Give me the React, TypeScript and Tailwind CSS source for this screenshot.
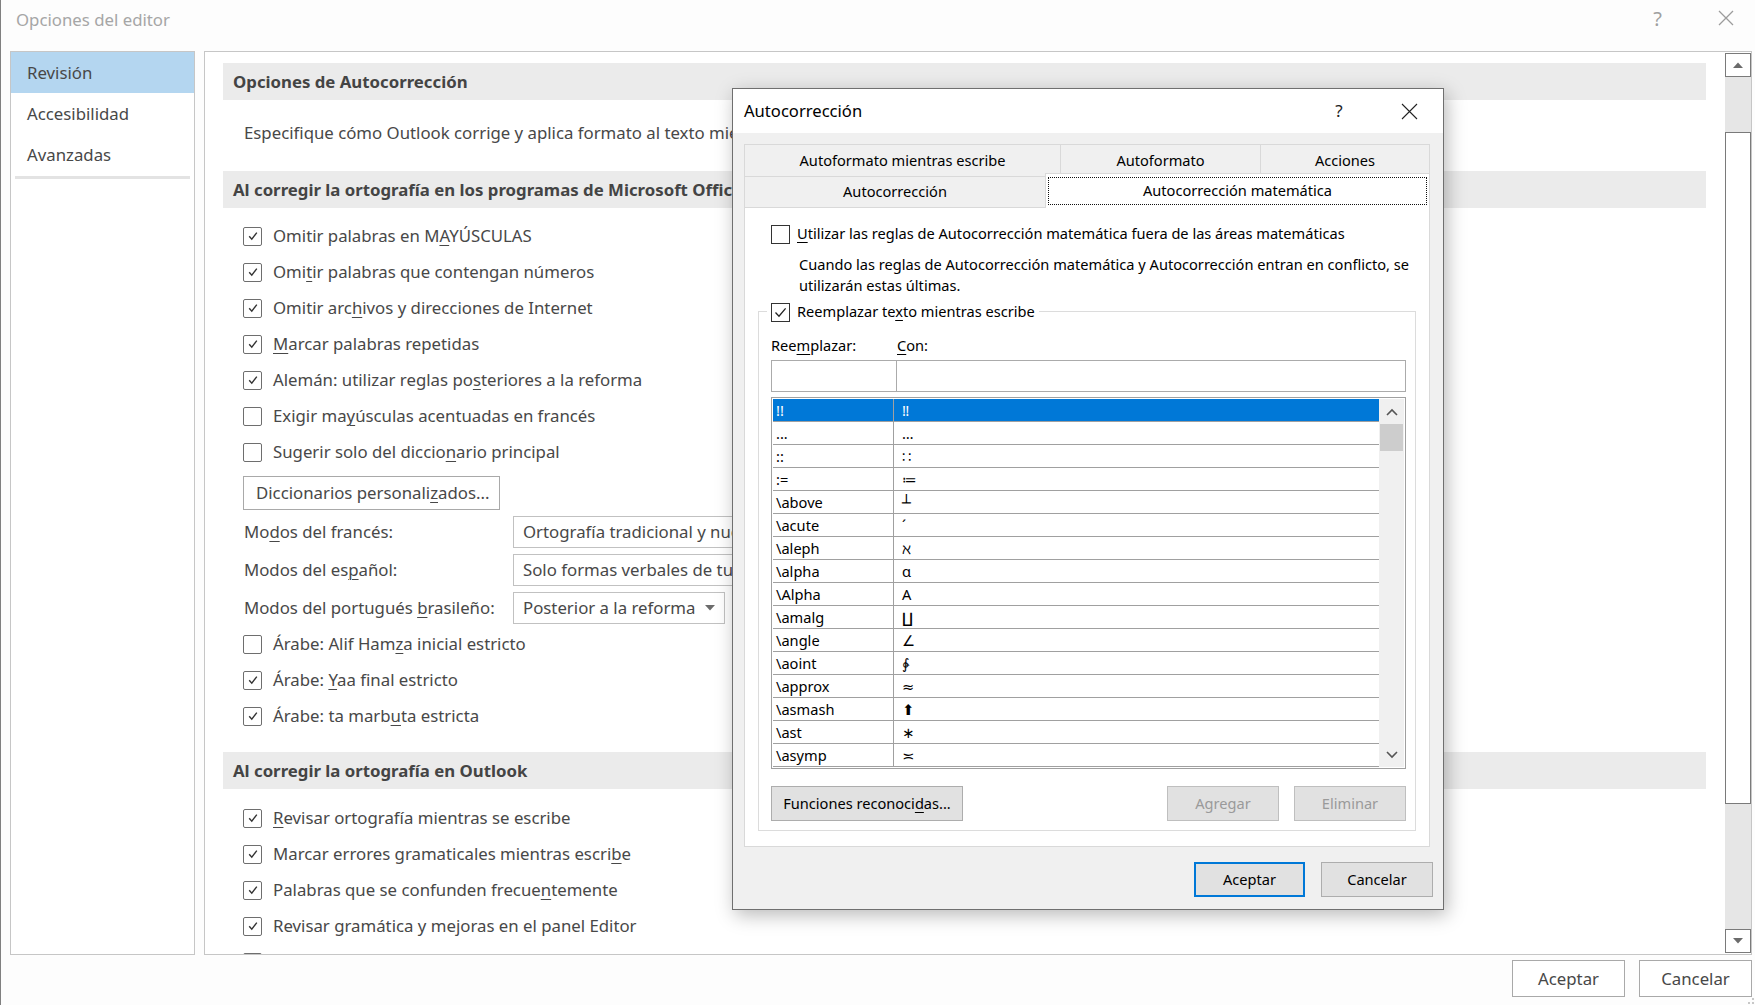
import React from "react";

function Acc({ t }: { t: string }) {
  const i = t.indexOf("&");
  if (i < 0) return <>{t}</>;
  return (
    <>
      {t.slice(0, i)}
      <span className="underline decoration-1 underline-offset-[3px]">{t[i + 1]}</span>
      {t.slice(i + 2)}
    </>
  );
}

function MainCheck({ checked }: { checked: boolean }) {
  return (
    <span className="w-[19px] h-[19px] border-[1.5px] border-[#6e6e6e] rounded-[2px] bg-white flex items-center justify-center shrink-0">
      {checked && (
        <svg width="12" height="12" viewBox="0 0 12 12">
          <path d="M2.2 6.2 L4.8 9.2 L9.8 2.6" fill="none" stroke="#333" strokeWidth="1.4" />
        </svg>
      )}
    </span>
  );
}

function DlgCheck({ checked }: { checked: boolean }) {
  return (
    <span className="w-[19px] h-[19px] border border-[#333] bg-white flex items-center justify-center shrink-0">
      {checked && (
        <svg width="15" height="15" viewBox="0 0 15 15">
          <path d="M2.5 7.5 L6 11.2 L12.6 3.4" fill="none" stroke="#222" strokeWidth="1.3" />
        </svg>
      )}
    </span>
  );
}

function Row({ checked, t }: { checked: boolean; t: string }) {
  return (
    <div className="h-[36px] flex items-center pl-[20px] gap-[11px] whitespace-nowrap">
      <MainCheck checked={checked} />
      {t && (
        <span>
          <Acc t={t} />
        </span>
      )}
    </div>
  );
}

function Band({ children }: { children: React.ReactNode }) {
  return (
    <div className="h-[37px] bg-[#ebebeb] flex items-center pl-[10px] font-bold text-[#444] whitespace-nowrap">
      {children}
    </div>
  );
}

const group1: [boolean, string][] = [
  [true, "Omitir palabras en M&AYÚSCULAS"],
  [true, "Omi&tir palabras que contengan números"],
  [true, "Omitir arc&hivos y direcciones de Internet"],
  [true, "&Marcar palabras repetidas"],
  [true, "Alemán: utilizar reglas po&steriores a la reforma"],
  [false, "Exigir ma&yúsculas acentuadas en francés"],
  [false, "Sugerir solo del diccio&nario principal"],
];
const group2: [boolean, string][] = [
  [false, "Árabe: Alif Ham&za inicial estricto"],
  [true, "Árabe: &Yaa final estricto"],
  [true, "Árabe: ta marb&uta estricta"],
];
const group3: [boolean, string][] = [
  [true, "&Revisar ortografía mientras se escribe"],
  [true, "Marcar errores gramaticales mientras escri&be"],
  [true, "Palabras que se confunden frecue&ntemente"],
  [true, "Revisar gramática y mejoras en el panel Editor"],
  [true, ""],
];

const listRows: [string, string][] = [
  ["!!", "‼"],
  ["...", "…"],
  ["::", "∷"],
  [":=", "≔"],
  ["\\above", "┴"],
  ["\\acute", "´"],
  ["\\aleph", "ℵ"],
  ["\\alpha", "α"],
  ["\\Alpha", "Α"],
  ["\\amalg", "∐"],
  ["\\angle", "∠"],
  ["\\aoint", "∳"],
  ["\\approx", "≈"],
  ["\\asmash", "⬆"],
  ["\\ast", "∗"],
  ["\\asymp", "≍"],
];

function Triangle({ up }: { up: boolean }) {
  return (
    <svg width="12" height="8" viewBox="0 0 12 8">
      <path d={up ? "M1 7 L6 1.5 L11 7 Z" : "M1 1 L6 6.5 L11 1 Z"} fill="#6b6b6b" />
    </svg>
  );
}

function Chevron({ up }: { up: boolean }) {
  return (
    <svg width="12" height="8" viewBox="0 0 12 8">
      <path d={up ? "M1 7 L6 2 L11 7" : "M1 1 L6 6 L11 1"} fill="none" stroke="#555" strokeWidth="1.6" />
    </svg>
  );
}

function Dialog() {
  return (
    <div className="absolute left-[731px] top-[88px] w-[712px] h-[822px] border border-[#6f6f6f] bg-[#f0f0f0] shadow-[3px_5px_18px_rgba(0,0,0,0.28)] flex flex-col text-black text-[14.6px] font-['Noto_Sans','DejaVu_Sans',sans-serif]">
      {/* title bar */}
      <div className="h-[44px] bg-white flex items-center shrink-0">
        <div className="pl-[11px] text-[16.6px] flex-1">Autocorrección</div>
        <div className="w-[40px] text-center text-[17px] text-[#222] mr-[30px]">?</div>
        <div className="w-[40px] flex justify-center mr-[14px]">
          <svg width="17" height="17" viewBox="0 0 17 17">
            <path d="M1 1 L16 16 M16 1 L1 16" stroke="#222" strokeWidth="1.1" />
          </svg>
        </div>
      </div>
      {/* tabs */}
      <div className="pl-[11px] pr-[13px] pt-[11px]">
        <div className="flex h-[32px]">
          <div className="w-[316px] border-t border-l border-[#d9d9d9] flex items-center justify-center">Autoformato mientras escribe</div>
          <div className="w-[200px] border-t border-l border-[#d9d9d9] flex items-center justify-center">Autoformato</div>
          <div className="w-[170px] border-t border-l border-r border-[#d9d9d9] flex items-center justify-center">Acciones</div>
        </div>
        <div className="flex h-[31px] items-end">
          <div className="w-[301px] h-[31px] border-t border-l border-[#d9d9d9] flex items-center justify-center">Autocorrección</div>
          <div className="relative z-10 w-[385px] h-[35px] -mb-[1px] bg-white border-t border-l border-r border-[#d9d9d9] flex items-stretch px-[2px] pt-[3px] pb-[3px]">
            <div className="flex-1 border border-dotted border-[#111] flex items-center justify-center">Autocorrección matemática</div>
          </div>
        </div>
        {/* panel */}
        <div className="h-[640px] bg-white border border-[#d9d9d9] px-[13px] pt-[16px]">
          <div className="flex items-center gap-[7px] pl-[13px] h-[20px] whitespace-nowrap">
            <DlgCheck checked={false} />
            <span>
              <Acc t="&Utilizar las reglas de Autocorrección matemática fuera de las áreas matemáticas" />
            </span>
          </div>
          <div className="mt-[10px] pl-[41px] leading-[21px] whitespace-nowrap">
            <div>Cuando las reglas de Autocorrección matemática y Autocorrección entran en conflicto, se</div>
            <div>utilizarán estas últimas.</div>
          </div>
          <div className="relative mt-[15px] border border-[#dcdcdc] pl-[12px] pr-[9px] pt-[24px] pb-[9px]">
            <div className="absolute -top-[10px] left-[8px] bg-white px-[4px] flex items-center gap-[7px] h-[20px] whitespace-nowrap">
              <DlgCheck checked={true} />
              <span>
                <Acc t="Reemplazar te&xto mientras escribe" />
              </span>
            </div>
            <div className="flex h-[20px] items-center">
              <div className="w-[126px]">
                <Acc t="Ree&mplazar:" />
              </div>
              <div>
                <Acc t="&Con:" />
              </div>
            </div>
            <div className="mt-[4px] flex h-[32px]">
              <div className="w-[126px] border border-[#ababab] bg-white" />
              <div className="flex-1 border border-l-0 border-[#ababab] bg-white" />
            </div>
            <div className="mt-[5px] h-[372px] border border-[#a0a0a0] bg-white flex p-[1px]">
              <div className="flex-1 flex flex-col">
                {listRows.map(([a, b], i) => (
                  <div
                    key={i}
                    className={
                      i === 0
                        ? "h-[23px] flex border-b border-[#a0a0a0] bg-[#0078d7] text-white"
                        : "h-[23px] flex border-b border-[#a0a0a0] text-black"
                    }
                  >
                    <div className="w-[121px] border-r border-[#a0a0a0] pl-[3px] leading-[22px] whitespace-nowrap">{a}</div>
                    <div className="flex-1 pl-[8px] leading-[22px]">{b}</div>
                  </div>
                ))}
              </div>
              <div className="w-[25px] bg-[#f0f0f0] flex flex-col">
                <div className="h-[25px] flex items-center justify-center">
                  <Chevron up={true} />
                </div>
                <div className="h-[27px] bg-[#cdcdcd] mx-[1px]" />
                <div className="flex-1" />
                <div className="h-[25px] flex items-center justify-center">
                  <Chevron up={false} />
                </div>
              </div>
            </div>
            <div className="mt-[17px] flex h-[35px]">
              <div className="w-[192px] border border-[#adadad] bg-[#e1e1e1] flex items-center justify-center whitespace-nowrap">
                <Acc t="Funciones reconoci&das..." />
              </div>
              <div className="flex-1" />
              <div className="w-[112px] border border-[#bfbfbf] bg-[#e1e1e1] text-[#9a9a9a] flex items-center justify-center">Agregar</div>
              <div className="w-[112px] ml-[15px] border border-[#bfbfbf] bg-[#e1e1e1] text-[#9a9a9a] flex items-center justify-center">Eliminar</div>
            </div>
          </div>
        </div>
      </div>
      {/* footer */}
      <div className="flex justify-end gap-[16px] pr-[10px] mt-[15px]">
        <div className="w-[111px] h-[35px] border-2 border-[#0078d7] bg-[#e1e1e1] flex items-center justify-center">Aceptar</div>
        <div className="w-[112px] h-[35px] border border-[#adadad] bg-[#e1e1e1] flex items-center justify-center">Cancelar</div>
      </div>
    </div>
  );
}

export default function App() {
  return (
    <div className="relative w-[1755px] h-[1005px] overflow-hidden bg-[#fdfdfd] border-l border-[#808080] text-[#484848] text-[16.8px] font-['Noto_Sans','DejaVu_Sans',sans-serif] flex flex-col">
      {/* title */}
      <div className="h-[51px] flex items-start shrink-0">
        <div className="pl-[15px] pt-[7px] leading-[26px] text-[#a6a6a6] flex-1">Opciones del editor</div>
        <div className="pt-[4px] text-[20px] text-[#a0a0a0] mr-[56px]">?</div>
        <div className="pt-[10px] mr-[21px]">
          <svg width="16" height="16" viewBox="0 0 16 16">
            <path d="M1 1 L15 15 M15 1 L1 15" stroke="#9c9c9c" strokeWidth="1.3" />
          </svg>
        </div>
      </div>
      {/* body */}
      <div className="h-[904px] flex pl-[9px] pr-[3px] gap-[9px] shrink-0">
        <div className="w-[185px] border border-[#c6c6c6] bg-white flex flex-col">
          <div className="h-[41px] bg-[#b4d6f0] flex items-center pl-[16px]">Revisión</div>
          <div className="h-[41px] flex items-center pl-[16px]">Accesibilidad</div>
          <div className="h-[42px] flex items-center pl-[16px]">Avanzadas</div>
          <div className="h-[3px] bg-[#e3e3e3] mx-[4px]" />
        </div>
        <div className="flex-1 border border-[#c6c6c6] bg-white flex">
          <div className="flex-1 overflow-hidden pl-[18px] pr-[19px] pt-[11px]">
            <Band>Opciones de Autocorrección</Band>
            <div className="h-[71px] pl-[21px] pt-[20px] leading-[26px] whitespace-nowrap">
              Especifique cómo Outlook corrige y aplica formato al texto mientras escribe:
            </div>
            <Band>Al corregir la ortografía en los programas de Microsoft Office</Band>
            <div className="pt-[10px]">
              {group1.map(([c, t], i) => (
                <Row key={i} checked={c} t={t} />
              ))}
            </div>
            <div className="mt-[6px] ml-[20px] w-[257px] h-[34px] border border-[#a9a9a9] bg-white flex items-center pl-[12px] whitespace-nowrap">
              <Acc t="Diccionarios personali&zados..." />
            </div>
            <div className="mt-[6px] flex flex-col gap-[6px]">
              <div className="flex h-[32px] items-center">
                <div className="w-[290px] pl-[21px] whitespace-nowrap">
                  <Acc t="Mo&dos del francés:" />
                </div>
                <div className="w-[420px] h-[32px] border border-[#c1c1c1] flex items-center pl-[9px] whitespace-nowrap">Ortografía tradicional y nueva</div>
              </div>
              <div className="flex h-[32px] items-center">
                <div className="w-[290px] pl-[21px] whitespace-nowrap">
                  <Acc t="Modos del es&pañol:" />
                </div>
                <div className="w-[420px] h-[32px] border border-[#c1c1c1] flex items-center pl-[9px] whitespace-nowrap">Solo formas verbales de tuteo</div>
              </div>
              <div className="flex h-[32px] items-center">
                <div className="w-[290px] pl-[21px] whitespace-nowrap">
                  <Acc t="Modos del portugués &brasileño:" />
                </div>
                <div className="w-[212px] h-[32px] border border-[#c1c1c1] flex items-center pl-[9px] pr-[8px] whitespace-nowrap">
                  <span className="flex-1">Posterior a la reforma</span>
                  <Triangle up={false} />
                </div>
              </div>
            </div>
            <div className="mt-[2px]">
              {group2.map(([c, t], i) => (
                <Row key={i} checked={c} t={t} />
              ))}
            </div>
            <div className="mt-[18px]">
              <Band>Al corregir la ortografía en Outlook</Band>
            </div>
            <div className="mt-[11px]">
              {group3.map(([c, t], i) => (
                <Row key={i} checked={c} t={t} />
              ))}
            </div>
          </div>
          {/* scrollbar */}
          <div className="w-[26px] flex flex-col pt-[1px] pb-[1px]">
            <div className="h-[24px] border border-[#7a7a7a] bg-white flex items-center justify-center">
              <Triangle up={true} />
            </div>
            <div className="h-[55px] bg-[#e6e6e6]" />
            <div className="h-[672px] border border-[#7a7a7a] bg-white" />
            <div className="flex-1 bg-[#e6e6e6]" />
            <div className="h-[24px] border border-[#7a7a7a] bg-white flex items-center justify-center">
              <Triangle up={false} />
            </div>
          </div>
        </div>
      </div>
      {/* footer */}
      <div className="flex-1 flex justify-end items-start pt-[5px] pr-[3px] gap-[14px]">
        <div className="w-[113px] h-[37px] border border-[#a9a9a9] bg-white flex items-center justify-center">Aceptar</div>
        <div className="w-[113px] h-[37px] border border-[#a9a9a9] bg-white flex items-center justify-center">Cancelar</div>
      </div>
      <svg className="absolute right-0 bottom-0" width="8" height="8" viewBox="0 0 8 8">
        <rect x="5" y="1" width="2" height="2" fill="#c8c8c8" />
        <rect x="1" y="5" width="2" height="2" fill="#c8c8c8" />
        <rect x="5" y="5" width="2" height="2" fill="#c8c8c8" />
      </svg>
      <Dialog />
    </div>
  );
}
